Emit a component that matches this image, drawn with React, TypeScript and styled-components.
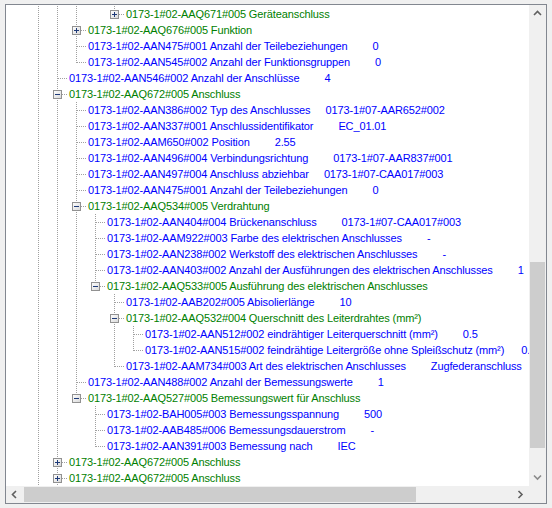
import React from "react";
import styled, { createGlobalStyle } from "styled-components";

const GlobalStyle = createGlobalStyle`
  html, body { margin: 0; padding: 0; background: #f0f0f0; }
  body { font-family: "Liberation Sans", Arial, sans-serif; }
`;

type Kind = "leaf" | "open" | "closed";
interface RowData {
  level: number;
  kind: Kind;
  code: string;
  value?: string;
  gap?: number;
}

const rows: RowData[] = [
  { level: 3, kind: "closed", code: "0173-1#02-AAQ671#005 Geräteanschluss" },
  { level: 1, kind: "closed", code: "0173-1#02-AAQ676#005 Funktion" },
  { level: 1, kind: "leaf", code: "0173-1#02-AAN475#001 Anzahl der Teilebeziehungen", value: "0" },
  { level: 1, kind: "leaf", code: "0173-1#02-AAN545#002 Anzahl der Funktionsgruppen", value: "0" },
  { level: 0, kind: "leaf", code: "0173-1#02-AAN546#002 Anzahl der Anschlüsse", value: "4" },
  { level: 0, kind: "open", code: "0173-1#02-AAQ672#005 Anschluss" },
  { level: 1, kind: "leaf", code: "0173-1#02-AAN386#002 Typ des Anschlusses", value: "0173-1#07-AAR652#002", gap: 15 },
  { level: 1, kind: "leaf", code: "0173-1#02-AAN337#001 Anschlussidentifikator", value: "EC_01.01" },
  { level: 1, kind: "leaf", code: "0173-1#02-AAM650#002 Position", value: "2.55" },
  { level: 1, kind: "leaf", code: "0173-1#02-AAN496#004 Verbindungsrichtung", value: "0173-1#07-AAR837#001" },
  { level: 1, kind: "leaf", code: "0173-1#02-AAN497#004 Anschluss abziehbar", value: "0173-1#07-CAA017#003", gap: 15 },
  { level: 1, kind: "leaf", code: "0173-1#02-AAN475#001 Anzahl der Teilebeziehungen", value: "0" },
  { level: 1, kind: "open", code: "0173-1#02-AAQ534#005 Verdrahtung" },
  { level: 2, kind: "leaf", code: "0173-1#02-AAN404#004 Brückenanschluss", value: "0173-1#07-CAA017#003" },
  { level: 2, kind: "leaf", code: "0173-1#02-AAM922#003 Farbe des elektrischen Anschlusses", value: "-" },
  { level: 2, kind: "leaf", code: "0173-1#02-AAN238#002 Werkstoff des elektrischen Anschlusses", value: "-" },
  { level: 2, kind: "leaf", code: "0173-1#02-AAN403#002 Anzahl der Ausführungen des elektrischen Anschlusses", value: "1" },
  { level: 2, kind: "open", code: "0173-1#02-AAQ533#005 Ausführung des elektrischen Anschlusses" },
  { level: 3, kind: "leaf", code: "0173-1#02-AAB202#005 Abisolierlänge", value: "10" },
  { level: 3, kind: "open", code: "0173-1#02-AAQ532#004 Querschnitt des Leiterdrahtes (mm²)" },
  { level: 4, kind: "leaf", code: "0173-1#02-AAN512#002 eindrähtiger Leiterquerschnitt (mm²)", value: "0.5" },
  { level: 4, kind: "leaf", code: "0173-1#02-AAN515#002 feindrähtige Leitergröße ohne Spleißschutz (mm²)", value: "0.75", gap: 17 },
  { level: 3, kind: "leaf", code: "0173-1#02-AAM734#003 Art des elektrischen Anschlusses", value: "Zugfederanschluss" },
  { level: 1, kind: "leaf", code: "0173-1#02-AAN488#002 Anzahl der Bemessungswerte", value: "1" },
  { level: 1, kind: "open", code: "0173-1#02-AAQ527#005 Bemessungswert für Anschluss" },
  { level: 2, kind: "leaf", code: "0173-1#02-BAH005#003 Bemessungsspannung", value: "500" },
  { level: 2, kind: "leaf", code: "0173-1#02-AAB485#006 Bemessungsdauerstrom", value: "-" },
  { level: 2, kind: "leaf", code: "0173-1#02-AAN391#003 Bemessung nach", value: "IEC" },
  { level: 0, kind: "closed", code: "0173-1#02-AAQ672#005 Anschluss" },
  { level: 0, kind: "closed", code: "0173-1#02-AAQ672#005 Anschluss" },
];

// does a sibling at level k follow row i (before leaving that branch)?
function continues(i: number, k: number): boolean {
  for (let j = i + 1; j < rows.length; j++) {
    if (rows[j].level < k) return false;
    if (rows[j].level === k) return true;
  }
  return k <= 0;
}

/* ---------- styled parts ---------- */

const Frame = styled.div`
  box-sizing: border-box;
  margin: 4px 0 0 5px;
  width: 542px;
  height: 500px;
  border: 1px solid #828790;
  display: grid;
  grid-template-columns: 1fr 17px;
  grid-template-rows: 1fr 17px;
  background: #ffffff;
`;

const Viewport = styled.div`
  overflow: hidden;
  background: #ffffff;
  padding: 1px 0 0 23px;
  min-width: 0;
`;

const Row = styled.div`
  display: flex;
  align-items: flex-start;
  height: 16px;
  white-space: nowrap;
`;

const Label = styled.span<{ $green: boolean }>`
  margin-left: 2px;
  font-size: 11px;
  line-height: 16px;
  letter-spacing: -0.12px;
  color: ${(p) => (p.$green ? "#008000" : "#0000ff")};
`;

const Value = styled.span<{ $gap: number }>`
  margin-left: ${(p) => p.$gap}px;
`;

const ScrollV = styled.div`
  background: #f0f0f0;
  display: flex;
  flex-direction: column;
`;

const ScrollH = styled.div`
  background: #f0f0f0;
  display: flex;
  flex-direction: row;
  min-width: 0;
`;

const Corner = styled.div`
  background: #f0f0f0;
`;

const Arrow = styled.div`
  flex: 0 0 17px;
  width: 17px;
  height: 17px;
  display: flex;
  align-items: center;
  justify-content: center;
`;

const TrackV = styled.div`
  flex: 1;
  display: flex;
  flex-direction: column;
`;

const TrackH = styled.div`
  flex: 1;
  display: flex;
  flex-direction: row;
`;

const ThumbV = styled.div<{ $offset: number; $size: number }>`
  margin: ${(p) => p.$offset}px 1px 0 1px;
  height: ${(p) => p.$size}px;
  background: #cdcdcd;
`;

const ThumbH = styled.div<{ $offset: number; $size: number }>`
  margin: 1px 0 1px ${(p) => p.$offset}px;
  width: ${(p) => p.$size}px;
  background: #cdcdcd;
`;

/* ---------- drawings ---------- */

type Conn = "pass" | "none" | "tee" | "ell";

const LINE = "#a0a0a0";

function Connector({ type, box }: { type: Conn; box?: "plus" | "minus" }) {
  return (
    <svg width="19" height="16" shapeRendering="crispEdges" style={{ flex: "0 0 19px", display: "block" }}>
      {(type === "pass" || type === "tee") && (
        <line x1="9.5" y1="0" x2="9.5" y2="16" stroke={LINE} strokeDasharray="1 1" />
      )}
      {type === "ell" && <line x1="9.5" y1="0" x2="9.5" y2="9" stroke={LINE} strokeDasharray="1 1" />}
      {(type === "tee" || type === "ell") && (
        <line x1="10" y1="8.5" x2="19" y2="8.5" stroke={LINE} strokeDasharray="1 1" />
      )}
      {box && (
        <g>
          <defs>
            <linearGradient id="bx" x1="0" y1="0" x2="1" y2="1">
              <stop offset="0" stopColor="#ffffff" />
              <stop offset="1" stopColor="#d8d8d8" />
            </linearGradient>
          </defs>
          <rect x="5.5" y="4.5" width="8" height="8" fill="url(#bx)" stroke="#919191" />
          <line x1="7" y1="8.5" x2="12" y2="8.5" stroke="#1e3a78" />
          {box === "plus" && <line x1="9.5" y1="6" x2="9.5" y2="11" stroke="#1e3a78" />}
        </g>
      )}
    </svg>
  );
}

function Chevron({ dir, color = "#606060" }: { dir: "up" | "down" | "left" | "right"; color?: string }) {
  const pts: Record<string, string> = {
    up: "1,5 4.5,1.5 8,5",
    down: "1,1.5 4.5,5 8,1.5",
    left: "5,1 1.5,4.5 5,8",
    right: "1.5,1 5,4.5 1.5,8",
  };
  const w = dir === "up" || dir === "down" ? 9 : 7;
  const h = dir === "up" || dir === "down" ? 7 : 9;
  return (
    <svg width={w} height={h} viewBox={`0 0 ${w} ${h}`}>
      <polyline points={pts[dir]} fill="none" stroke={color} strokeWidth="1.6" />
    </svg>
  );
}

/* ---------- app ---------- */

function TreeRow({ row, index }: { row: RowData; index: number }) {
  const cells: React.ReactNode[] = [];
  for (let k = -1; k < row.level; k++) {
    cells.push(<Connector key={k} type={continues(index, k) ? "pass" : "none"} />);
  }
  const own: Conn = continues(index, row.level) ? "tee" : "ell";
  cells.push(
    <Connector
      key="own"
      type={own}
      box={row.kind === "open" ? "minus" : row.kind === "closed" ? "plus" : undefined}
    />
  );
  return (
    <Row>
      {cells}
      <Label $green={row.kind !== "leaf"}>
        {row.code}
        {row.value !== undefined && <Value $gap={row.gap ?? 25}>{row.value}</Value>}
      </Label>
    </Row>
  );
}

export default function App() {
  return (
    <>
      <GlobalStyle />
      <Frame>
        <Viewport>
          {rows.map((r, i) => (
            <TreeRow key={i} row={r} index={i} />
          ))}
        </Viewport>
        <ScrollV>
          <Arrow>
            <Chevron dir="up" />
          </Arrow>
          <TrackV>
            <ThumbV $offset={240} $size={186} />
          </TrackV>
          <Arrow>
            <Chevron dir="down" color="#8a8a8a" />
          </Arrow>
        </ScrollV>
        <ScrollH>
          <Arrow>
            <Chevron dir="left" />
          </Arrow>
          <TrackH>
            <ThumbH $offset={1} $size={392} />
          </TrackH>
          <Arrow>
            <Chevron dir="right" />
          </Arrow>
        </ScrollH>
        <Corner />
      </Frame>
    </>
  );
}
